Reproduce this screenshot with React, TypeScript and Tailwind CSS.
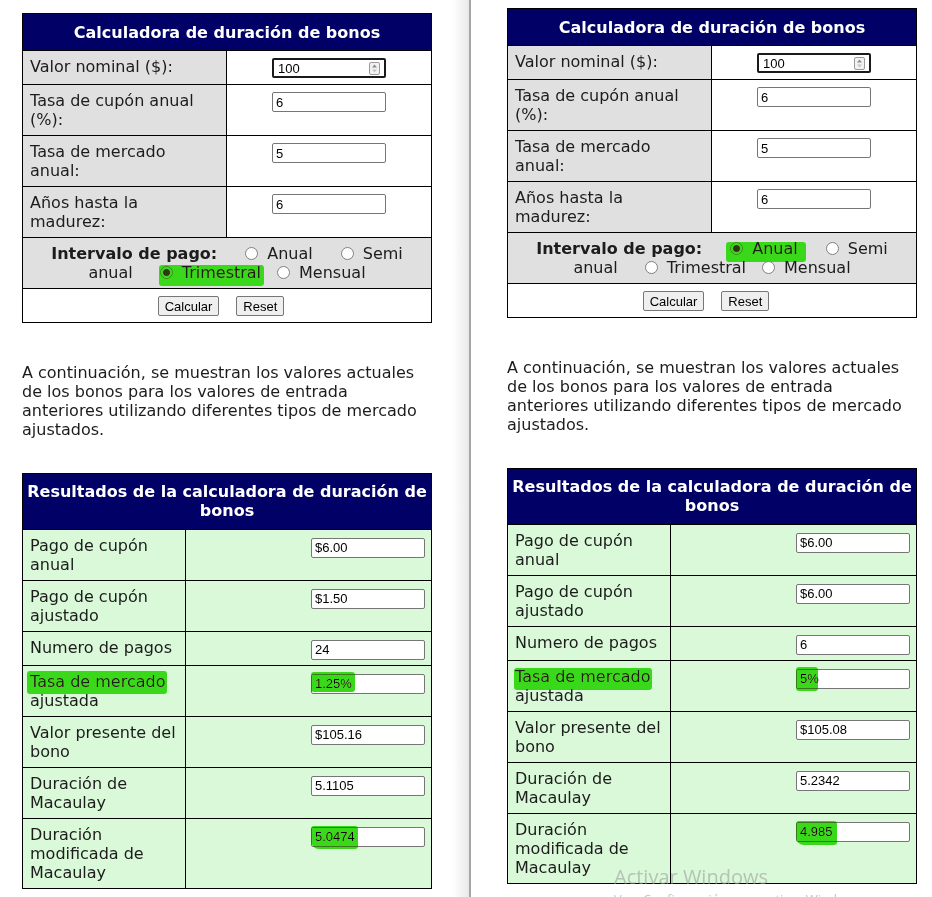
import React from "react";

type Result = {
  label: string[];
  value: string;
  markLabel?: string;
  markValue?: string;
};

type PanelData = {
  checked: "Anual" | "Trimestral";
  mark: string;
  results: Result[];
};

const fieldFont = "font-['Liberation_Sans',Arial,sans-serif] text-[13px] text-black";

const inputRows = [
  { label: ["Valor nominal ($):"], value: "100", number: true },
  { label: ["Tasa de cupón anual", "(%):"], value: "6" },
  { label: ["Tasa de mercado", "anual:"], value: "5" },
  { label: ["Años hasta la", "madurez:"], value: "6" },
];

const panels: PanelData[] = [
  {
    checked: "Trimestral",
    mark: "left-[-1px] right-[-3px] top-[2px] bottom-[-4px]",
    results: [
      { label: ["Pago de cupón", "anual"], value: "$6.00" },
      { label: ["Pago de cupón", "ajustado"], value: "$1.50" },
      { label: ["Numero de pagos"], value: "24" },
      {
        label: ["Tasa de mercado", "ajustada"],
        value: "1.25%",
        markLabel: "left-[-3px] right-[-2px] top-[-1px] bottom-[-3px]",
        markValue: "left-0 top-[-1px] h-[20px] w-[44px]",
      },
      { label: ["Valor presente del", "bono"], value: "$105.16" },
      { label: ["Duración de", "Macaulay"], value: "5.1105" },
      {
        label: ["Duración", "modificada de", "Macaulay"],
        value: "5.0474",
        markValue: "left-0 top-0 h-[23px] w-[47px] rounded-bl-[8px]",
      },
    ],
  },
  {
    checked: "Anual",
    mark: "left-[-4px] right-[-8px] top-[3px] bottom-[-4px]",
    results: [
      { label: ["Pago de cupón", "anual"], value: "$6.00" },
      { label: ["Pago de cupón", "ajustado"], value: "$6.00" },
      { label: ["Numero de pagos"], value: "6" },
      {
        label: ["Tasa de mercado", "ajustada"],
        value: "5%",
        markLabel: "left-[-1px] right-[-2px] top-[1px] bottom-[-4px]",
        markValue: "left-0 top-[-1px] h-[24px] w-[22px]",
      },
      { label: ["Valor presente del", "bono"], value: "$105.08" },
      { label: ["Duración de", "Macaulay"], value: "5.2342" },
      {
        label: ["Duración", "modificada de", "Macaulay"],
        value: "4.985",
        markValue: "left-0 top-0 h-[24px] w-[41px] rounded-bl-[8px]",
      },
    ],
  },
];

// hand-drawn marker strokes sitting over the text
function Marker({ className }: { className: string }) {
  return (
    <span
      className={`pointer-events-none absolute rounded-[3px] bg-[#3ad81a] mix-blend-darken ${className}`}
    />
  );
}

function Radio({ checked }: { checked?: boolean }) {
  return (
    <span className="relative inline-block h-[13px] w-[13px] shrink-0 rounded-full border border-[#808080] bg-white">
      {checked && (
        <span className="absolute left-[2px] top-[2px] h-[7px] w-[7px] rounded-full bg-[#333]" />
      )}
    </span>
  );
}

function Option({
  label,
  gap,
  checked,
  mark,
}: {
  label: string;
  gap: string;
  checked: boolean;
  mark: string;
}) {
  return (
    <span className={`relative flex items-center ${gap}`}>
      <Radio checked={checked} />
      <span className="ml-[9px]">{label}</span>
      {checked && <Marker className={mark} />}
    </span>
  );
}

function TextField({ value }: { value: string }) {
  return (
    <input
      readOnly
      value={value}
      className={`h-[20px] w-[114px] rounded-[2px] border border-[#767676] bg-white px-[3px] outline-none ${fieldFont}`}
    />
  );
}

function NumberField({ value }: { value: string }) {
  return (
    <div
      className={`flex h-[20px] w-[114px] items-center justify-between rounded-[2px] border-2 border-[#1a1a1a] bg-white pl-[4px] pr-[4px] ${fieldFont}`}
    >
      <span>{value}</span>
      <svg width="11" height="13" viewBox="0 0 11 13">
        <rect x="0.5" y="0.5" width="10" height="12" rx="1.5" fill="#f2f2f2" stroke="#9a9a9a" />
        <path d="M3 5.5 L5.5 2.5 L8 5.5Z" fill="#8a8a8a" />
        <path d="M3 7.5 L5.5 10.5 L8 7.5Z" fill="#c4c4c4" />
      </svg>
    </div>
  );
}

function Calculator({ data }: { data: PanelData }) {
  const c = data.checked;
  return (
    <div className="w-[410px] border border-black">
      <div className="bg-[#000066] pb-[8px] pt-[9px] text-center font-bold text-white">
        Calculadora de duración de bonos
      </div>
      {inputRows.map((r) => (
        <div key={r.label[0]} className="grid grid-cols-[204px_1fr] border-t border-black">
          <div className="border-r border-black bg-[#e0e0e0] py-[6px] pl-[7px]">
            {r.label.map((l) => (
              <div key={l} className="whitespace-nowrap">
                {l}
              </div>
            ))}
          </div>
          <div className="flex items-start justify-center bg-white pb-[6px] pt-[7px]">
            {r.number ? <NumberField value={r.value} /> : <TextField value={r.value} />}
          </div>
        </div>
      ))}
      <div className="border-t border-black bg-[#e0e0e0] py-[6px]">
        <div className="flex h-[19px] items-center justify-center whitespace-nowrap">
          <span className="font-bold">Intervalo de pago:</span>
          <Option label="Anual" gap="ml-[28px]" checked={c === "Anual"} mark={data.mark} />
          <Option label="Semi" gap="ml-[28px]" checked={false} mark="" />
        </div>
        <div className="flex h-[19px] items-center justify-center whitespace-nowrap">
          <span>anual</span>
          <Option label="Trimestral" gap="ml-[27px]" checked={c === "Trimestral"} mark={data.mark} />
          <Option label="Mensual" gap="ml-[16px]" checked={false} mark="" />
        </div>
      </div>
      <div className="flex items-start justify-center gap-[17px] border-t border-black bg-white pb-[6px] pr-[12px] pt-[7px]">
        <button className={`h-[20px] rounded-[2px] border border-[#767676] bg-[#efefef] px-[6px] ${fieldFont}`}>
          Calcular
        </button>
        <button className={`h-[20px] rounded-[2px] border border-[#767676] bg-[#efefef] px-[6px] ${fieldFont}`}>
          Reset
        </button>
      </div>
    </div>
  );
}

function Results({ rows }: { rows: Result[] }) {
  return (
    <div className="mt-[34px] w-[410px] border border-black">
      <div className="whitespace-nowrap bg-[#000066] pb-[9px] pt-[8px] text-center font-bold text-white">
        Resultados de la calculadora de duración de
        <br />
        bonos
      </div>
      {rows.map((r) => (
        <div key={r.label.join(" ")} className="grid grid-cols-[163px_1fr] border-t border-black bg-[#d9f9d9]">
          <div className="border-r border-black py-[6px] pl-[7px]">
            {r.label.map((l, i) => (
              <div key={l} className="whitespace-nowrap">
                {i === 0 && r.markLabel ? (
                  <span className="relative inline-block">
                    {l}
                    <Marker className={r.markLabel} />
                  </span>
                ) : (
                  l
                )}
              </div>
            ))}
          </div>
          <div className="flex items-start justify-end pb-[6px] pr-[6px] pt-[7px]">
            <span className="relative inline-block h-[20px]">
              <TextField value={r.value} />
              {r.markValue && <Marker className={r.markValue} />}
            </span>
          </div>
        </div>
      ))}
    </div>
  );
}

function Panel({ data }: { data: PanelData }) {
  return (
    <>
      <Calculator data={data} />
      <p className="mt-[40px] w-[410px] whitespace-nowrap">
        A continuación, se muestran los valores actuales
        <br />
        de los bonos para los valores de entrada
        <br />
        anteriores utilizando diferentes tipos de mercado
        <br />
        ajustados.
      </p>
      <Results rows={data.results} />
    </>
  );
}

export default function App() {
  return (
    <div className="relative flex h-[897px] w-[932px] overflow-hidden bg-white font-['DejaVu_Sans',Verdana,sans-serif] text-[16px] leading-[19px] text-[#1c1c1c]">
      <section className="w-[453px] shrink-0 pl-[22px] pt-[13px]">
        <Panel data={panels[0]} />
      </section>
      <div className="w-[16px] shrink-0 bg-linear-to-r from-white to-[#e9e9e9]" />
      <div className="w-[2px] shrink-0 bg-[#a6a6a6]" />
      <section className="flex-1 pl-[36px] pt-[8px]">
        <Panel data={panels[1]} />
      </section>
      <div className="pointer-events-none absolute left-[614px] top-[864px] font-['Open_Sans',sans-serif] text-[#9c9c9c]/60">
        <div className="text-[20px] leading-[26px]">Activar Windows</div>
        <div className="text-[13px] leading-[18px]">Ve a Configuración para activar Windows.</div>
      </div>
    </div>
  );
}
